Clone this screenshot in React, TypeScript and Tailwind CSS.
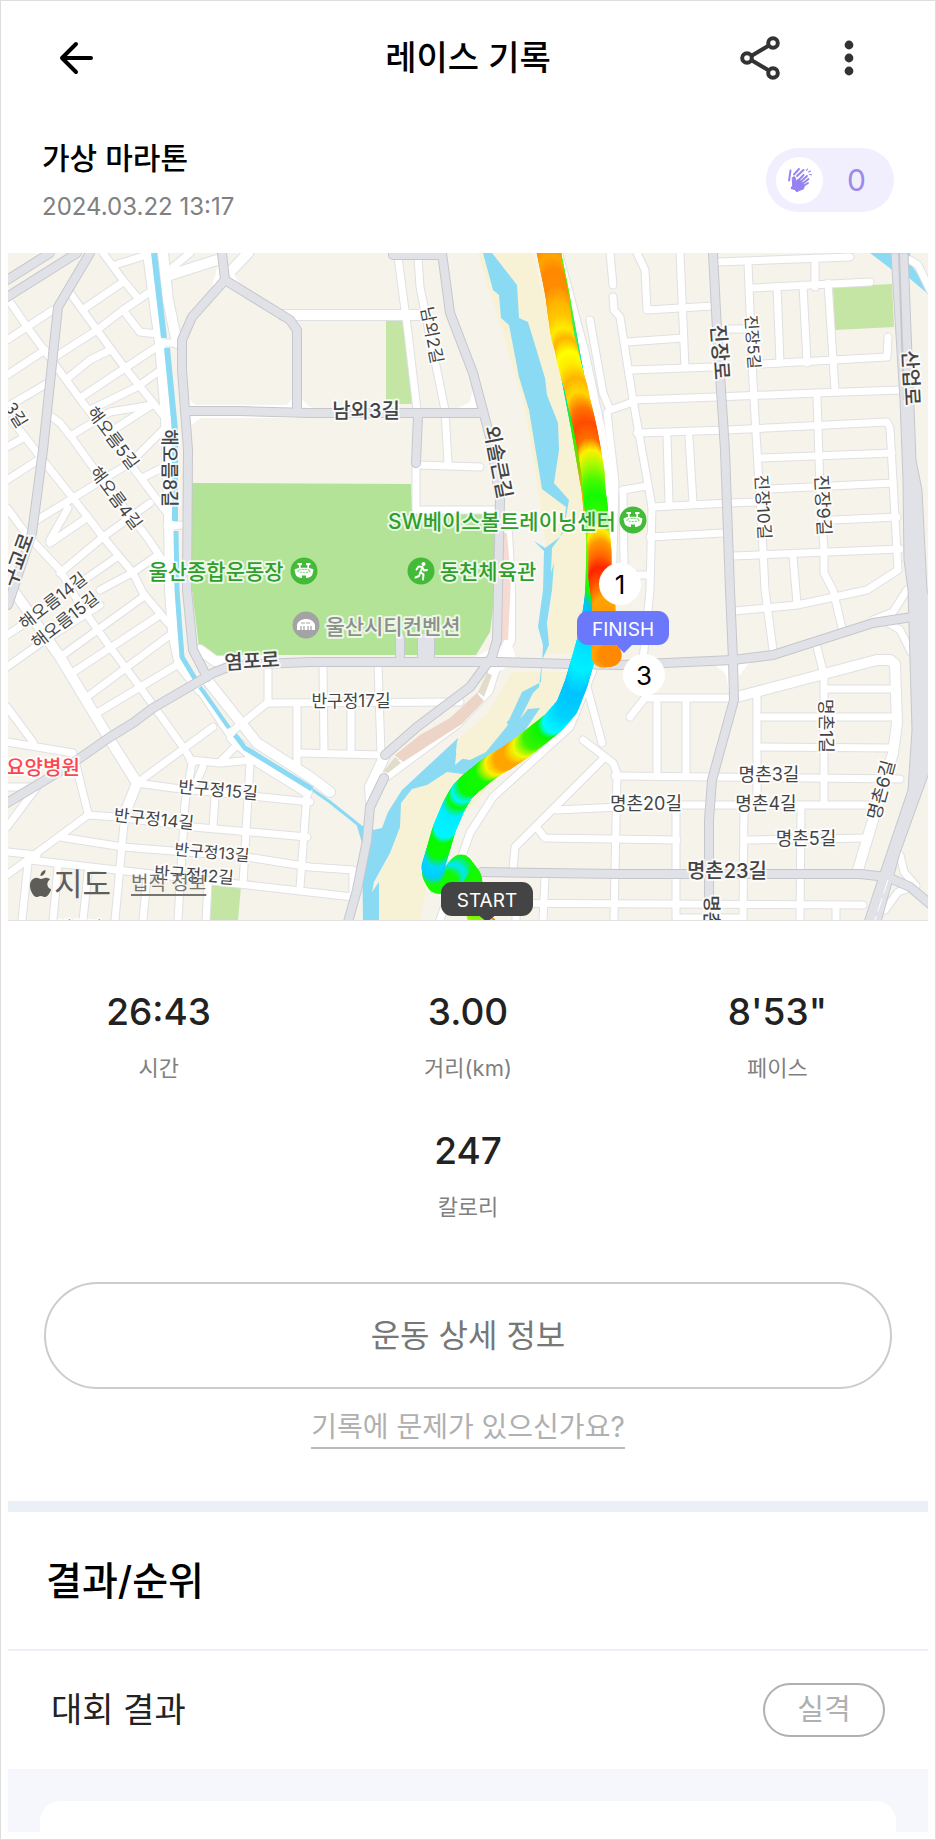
import React from 'react';

interface MapLabel {
    text: string;
    x: number;
    y: number;
    size: number;
    rotate?: number;
    bold?: boolean;
    color?: string;
}

interface RoutePoint {
    x: number;
    y: number;
    color: [number, number, number];
}

// Narrow residential streets
const streets = [
    '10,302 27,327 53,362 83,403 140,477 167,513', '70,293 97,330 125,368 167,420', '103,253 123,280 137,297',
    '115,265 147,255', '85,308 123,282', '7,340 53,310', '55,357 97,330 123,310 150,292', '123,310 140,332 157,334',
    '7,375 45,350', '68,378 90,360 110,350', '80,398 125,368 157,347', '90,410 137,387 158,372', '7,407 48,383',
    '72,435 110,412 152,405', '113,430 152,405', '37,520 73,498 130,463 165,428', '52,417 60,423 72,438 100,477 147,537 167,567',
    '7,447 25,437', '7,480 38,460', '12,420 25,437 53,473 73,498 103,537 133,573 143,593 168,623',
    '7,508 27,535 60,570 80,605 110,647 140,687 183,747 193,763', '142,478 162,468', '50,540 68,508', '50,543 88,517',
    '60,573 103,537 150,503', '80,583 117,557', '100,590 132,573 155,557', '160,343 178,343', '167,526 183,525',
    '167,272 190,253', '398,257 408,333 417,410', '418,257 420,287 445,410 448,463', '418,465 480,467',
    '416,463 416,510 497,510', '610,253 613,285', '613,297 614,310 620,317 633,400 652,507 650,590 643,660',
    '590,320 603,393 610,410 633,402', '607,413 615,483 612,590', '637,253 645,270 647,310 713,306', '680,253 685,367',
    '718,262 850,257', '748,263 753,383 763,550 765,590 773,650', '752,288 870,282', '777,287 780,363', '803,285 807,363',
    '815,258 815,287', '828,283 835,390', '627,342 683,338', '632,370 713,367', '730,329 747,329', '762,364 887,357 888,337',
    '633,400 717,397 817,393 900,390', '637,433 727,430 887,422 890,428 898,570 867,590 797,605 735,611', '667,437 669,503',
    '689,437 693,503', '817,397 820,490 824,550 824,573 833,590 842,628', '760,458 892,453', '770,489 893,483',
    '833,520 897,517', '652,507 730,503 757,502', '650,537 723,533', '733,556 900,549', '793,557 797,603', '623,490 647,486',
    '623,490 624,563', '637,575 650,575', '910,260 918,265 930,290', '7,635 50,607', '7,667 45,640 100,605',
    '63,655 143,597', '72,673 160,615', '87,697 170,635', '97,713 177,665', '7,707 33,742', '7,742 73,753 88,813',
    '7,787 33,787', '7,827 37,787', '137,783 213,727', '200,690 232,738', '230,733 267,703 460,702', '268,667 268,703',
    '297,705 297,770', '300,753 382,755', '323,665 324,752', '378,665 381,753', '351,705 351,752', '190,760 220,763 253,760',
    '235,747 220,762', '192,763 185,803 178,920', '203,767 193,790', '250,763 243,883', '137,783 173,788 310,802',
    '125,813 115,920', '88,815 117,817 193,827 307,837', '88,815 7,875', '215,797 213,827', '60,837 123,847 247,857 310,867 353,870 353,895',
    '307,793 300,887', '7,852 37,855', '30,860 117,870 353,897', '28,863 22,920', '58,867 53,920', '88,873 83,920',
    '147,877 143,920', '208,883 206,920', '593,670 570,727 493,797 470,833 457,870 440,920', '587,687 602,743',
    '583,740 613,763 617,773 614,920', '602,760 515,847 513,870', '557,810 620,807', '537,828 545,838 677,840',
    '545,877 543,920', '482,903 863,905', '516,903 516,920', '630,717 645,698 733,698', '657,703 657,773', '686,703 686,773',
    '615,776 900,779', '757,697 757,803', '817,647 824,675 824,803', '828,689 893,689', '762,717 893,717', '762,747 893,748',
    '615,805 870,805', '676,810 676,918 743,918', '744,807 743,918', '801,807 800,920', '748,840 867,838', '836,907 836,920',
    '873,620 893,612 907,590', '887,622 900,630 911,652', '900,855 904,872 916,886 898,892 885,910',
];

// White streets that are a bit wider
const wideStreets = [
    '148,253 160,343 166,417 169,510 170,590 173,633 180,665 200,690', '163,253 168,300 177,343', '170,275 217,260',
    '230,272 248,253', '283,315 423,315', '507,533 510,590 510,640 493,673 488,690 457,723 387,775',
    '557,253 583,350 600,430 612,520', '207,680 257,743 310,777 330,792', '232,738 260,763 307,792',
    '13,590 60,657 110,740 137,783 125,813', '385,755 370,787 371,803', '733,698 820,675 877,660 890,660 895,664 897,723 893,753 858,870',
    '200,650 215,661 240,661',
];

const mainRoads = [
    '713,253 717,330 725,450 730,590 733,660 734,700 712,780 709,820 709,900',
    '7,803 67,767 110,737 133,723 153,708 213,673 233,665 310,662 497,662 570,664 620,665 733,660 773,655 820,640 873,623 912,617',
    '90,253 58,307 50,383 43,450 32,533 8,605', '7,280 50,253', '7,297 77,253',
    '222,253 225,280 192,317 182,340 182,370 188,450 187,590 193,650 207,677', '225,280 290,320 297,330 297,410',
    '188,411 240,411 310,413 483,413', '393,255 440,255',
    '442,253 450,313 473,373 490,437 500,500 498,590 497,640 492,657 470,687 417,727 385,755',
    '384,778 370,807 367,840 357,890 348,922', '418,415 416,463', '400,638 400,660', '422,638 422,660', '430,638 430,660',
    '482,872 620,874 860,874 887,877', '890,878 910,887 930,904',
];

const HIGHWAY = '891,253 908,253 916,460 922,490 927,590 930,600 930,770 900,853 881,922 864,922 880,873 908,790 912,730 908,590 904,560 903,480 900,400';

const RIVER = '483,253 493,290 499,295 501,318 509,325 519,377 529,410 542,489 566,507 564,527 560,537 545,548 534,541 544,551 543,590 538,627 543,645 541,682 522,692 509,720 455,765 458,738 402,790 388,812 382,828 373,830 356,823 362,843 363,922 379,922 379,882 372,892 374,882 390,853 400,827 401,803 412,789 427,785 447,772 470,775 497,772 540,708 528,709 520,719 533,693 539,687 542,660 549,645 547,623 552,590 554,562 551,573 552,548 563,533 569,500 554,483 559,450 558,423 547,395 545,378 528,322 519,318 517,285 492,253';

const labels: MapLabel[] = [
    { text: '남외2길', x: 432, y: 335, size: 17, rotate: 79 },
    { text: '남외3길', x: 366, y: 411, size: 20, bold: true },
    { text: '외솔큰길', x: 498, y: 462, size: 20, rotate: 79, bold: true },
    { text: '진장로', x: 720, y: 352, size: 20, rotate: 86, bold: true },
    { text: '진장5길', x: 753, y: 342, size: 16, rotate: 86 },
    { text: '산업로', x: 911, y: 378, size: 20, rotate: 87, bold: true },
    { text: '진장10길', x: 763, y: 507, size: 17, rotate: 87 },
    { text: '진장9길', x: 823, y: 505, size: 18, rotate: 87 },
    { text: '해오름5길', x: 113, y: 438, size: 17, rotate: 53 },
    { text: '해오름4길', x: 116, y: 498, size: 17, rotate: 53 },
    { text: '해오름8길', x: 169, y: 468, size: 18, rotate: 90, bold: true },
    { text: '3길', x: 16, y: 415, size: 17, rotate: 58 },
    { text: '구교로', x: 18, y: 560, size: 20, rotate: -70, bold: true },
    { text: '해오름14길', x: 53, y: 601, size: 17, rotate: -38 },
    { text: '해오름15길', x: 65, y: 620, size: 17, rotate: -38 },
    { text: '염포로', x: 252, y: 661, size: 20, rotate: -3, bold: true },
    { text: '반구정17길', x: 351, y: 701, size: 17 },
    { text: '반구정15길', x: 218, y: 790, size: 17, rotate: 5 },
    { text: '반구정14길', x: 154, y: 819, size: 17, rotate: 6 },
    { text: '반구정13길', x: 212, y: 852, size: 16, rotate: 5 },
    { text: '반구정12길', x: 194, y: 875, size: 17, rotate: 4 },
    { text: '반구정', x: 80, y: 927, size: 16 },
    { text: '명촌1길', x: 826, y: 726, size: 17, rotate: 90 },
    { text: '명촌6길', x: 881, y: 790, size: 18, rotate: -75 },
    { text: '명촌3길', x: 769, y: 774, size: 18 },
    { text: '명촌4길', x: 766, y: 803, size: 18 },
    { text: '명촌20길', x: 646, y: 803, size: 18 },
    { text: '명촌5길', x: 806, y: 838, size: 18 },
    { text: '명촌23길', x: 727, y: 871, size: 20, bold: true },
    { text: '명촌로', x: 711, y: 920, size: 18, rotate: 90, bold: true },
    { text: '요양병원', x: 43, y: 768, size: 20, bold: true, color: '#ff4450' },
    { text: 'SW베이스볼트레이닝센터', x: 502, y: 521, size: 21, bold: true, color: '#2e9f2b' },
    { text: '울산종합운동장', x: 216, y: 571, size: 21, bold: true, color: '#2e9f2b' },
    { text: '동천체육관', x: 488, y: 571, size: 21, bold: true, color: '#2e9f2b' },
    { text: '울산시티컨벤션', x: 393, y: 626, size: 21, bold: true, color: '#8e8e8e' },
];

// Outbound leg, from START towards the north
const outbound: RoutePoint[] = [
    { x: 486, y: 927, color: [255, 60, 0] },
    { x: 480, y: 922, color: [255, 240, 0] },
    { x: 473, y: 895, color: [20, 250, 0] },
    { x: 470, y: 878, color: [20, 250, 0] },
    { x: 461, y: 866, color: [20, 250, 0] },
    { x: 453, y: 875, color: [0, 230, 255] },
    { x: 447, y: 883, color: [20, 250, 0] },
    { x: 438, y: 882, color: [20, 250, 0] },
    { x: 434, y: 875, color: [20, 250, 0] },
    { x: 433, y: 867, color: [0, 205, 255] },
    { x: 436, y: 857, color: [0, 215, 255] },
    { x: 439, y: 847, color: [10, 250, 0] },
    { x: 443, y: 833, color: [10, 250, 0] },
    { x: 445, y: 827, color: [0, 245, 255] },
    { x: 454, y: 806, color: [0, 235, 255] },
    { x: 459, y: 797, color: [10, 250, 0] },
    { x: 463, y: 791, color: [0, 245, 255] },
    { x: 470, y: 784, color: [10, 250, 0] },
    { x: 486, y: 771, color: [20, 250, 0] },
    { x: 496, y: 764, color: [255, 240, 0] },
    { x: 505, y: 759, color: [255, 165, 0] },
    { x: 514, y: 753, color: [255, 165, 0] },
    { x: 524, y: 746, color: [240, 250, 0] },
    { x: 534, y: 738, color: [60, 245, 0] },
    { x: 548, y: 727, color: [10, 245, 0] },
    { x: 554, y: 722, color: [0, 250, 255] },
    { x: 567, y: 707, color: [0, 210, 255] },
    { x: 576, y: 684, color: [0, 195, 255] },
    { x: 583, y: 660, color: [0, 240, 255] },
    { x: 591, y: 632, color: [0, 220, 255] },
    { x: 596, y: 600, color: [0, 190, 255] },
    { x: 597, y: 585, color: [20, 250, 0] },
    { x: 598, y: 540, color: [120, 250, 0] },
    { x: 593, y: 490, color: [255, 170, 0] },
    { x: 582, y: 425, color: [20, 250, 0] },
    { x: 573, y: 378, color: [0, 220, 220] },
    { x: 557, y: 290, color: [90, 250, 0] },
    { x: 548, y: 245, color: [90, 250, 0] },
];

// Way back to FINISH, painted over the outbound leg
const inbound: RoutePoint[] = [
    { x: 547, y: 245, color: [255, 120, 0] },
    { x: 551, y: 266, color: [255, 165, 0] },
    { x: 554, y: 280, color: [255, 135, 0] },
    { x: 557, y: 296, color: [255, 140, 0] },
    { x: 559, y: 312, color: [255, 180, 0] },
    { x: 561, y: 326, color: [255, 200, 0] },
    { x: 563, y: 338, color: [255, 235, 0] },
    { x: 566, y: 348, color: [255, 180, 0] },
    { x: 569, y: 362, color: [255, 255, 0] },
    { x: 572, y: 374, color: [255, 235, 0] },
    { x: 576, y: 388, color: [255, 180, 0] },
    { x: 579, y: 402, color: [255, 215, 0] },
    { x: 583, y: 418, color: [255, 115, 0] },
    { x: 586, y: 432, color: [255, 75, 0] },
    { x: 589, y: 448, color: [255, 110, 0] },
    { x: 591, y: 460, color: [255, 240, 0] },
    { x: 593, y: 472, color: [180, 250, 0] },
    { x: 594, y: 490, color: [70, 250, 0] },
    { x: 596, y: 505, color: [20, 250, 0] },
    { x: 598, y: 530, color: [60, 250, 0] },
    { x: 599, y: 540, color: [255, 240, 0] },
    { x: 600, y: 552, color: [255, 150, 0] },
    { x: 600, y: 565, color: [255, 105, 0] },
    { x: 600, y: 578, color: [255, 35, 0] },
    { x: 602, y: 592, color: [255, 85, 0] },
    { x: 604, y: 608, color: [255, 165, 0] },
    { x: 603, y: 640, color: [255, 140, 0] },
    { x: 603, y: 656, color: [255, 165, 0] },
    { x: 612, y: 655, color: [255, 130, 0] },
];

const interpolate = (points: RoutePoint[]) => {
    const dots: { x: number; y: number; fill: string }[] = [];
    for (let i = 0; i < points.length - 1; i++) {
        const a = points[i];
        const b = points[i + 1];
        const steps = Math.max(1, Math.round(Math.hypot(b.x - a.x, b.y - a.y) / 2));
        for (let s = 0; s < steps; s++) {
            const t = s / steps;
            const [r, g, bl] = a.color.map((c, k) => Math.round(c + (b.color[k] - c) * t));
            dots.push({ x: a.x + (b.x - a.x) * t, y: a.y + (b.y - a.y) * t, fill: `rgb(${r},${g},${bl})` });
        }
    }
    return dots;
};

const Lines: React.FC<{ items: string[]; color: string; width: number }> = ({ items, color, width }) => (
    <g fill="none" stroke={color} strokeWidth={width} strokeLinejoin="round" strokeLinecap="round">
        {items.map((points, i) => <polyline key={i} points={points} />)}
    </g>
);

const StadiumPin: React.FC<{ x: number; y: number }> = ({ x, y }) => (
    <g transform={`translate(${x} ${y})`}>
        <circle r="13.5" fill="#43bb38" />
        <path d="M-6.500-8h4.500v2h-1.300v3h-1.800v-3h-1.400zM2-8h4.500v2H5.100v3H3.300v-3H2z" fill="#fff" />
        <path d="M-9.500-1C-9-4 9-4 9.500-1L8.500 3C8 6 3.500 7 2 7V4.500h-4V7c-1.500 0-6-1-6.500-4z" fill="#fff" />
        <ellipse cy="0" rx="6.500" ry="1.500" fill="none" stroke="#43bb38" strokeWidth="0.800" strokeDasharray="2 1" />
    </g>
);

const RouteMap: React.FC = () => (
    <svg viewBox="8 253 920 667" className="block w-full" role="img" aria-label="레이스 경로 지도" fontFamily='Inter, "Noto Sans CJK KR", sans-serif'>
        <rect x="8" y="253" width="920" height="667" fill="#f6f3eb" />

        {/* parks and river banks */}
        <polygon points="192,483 411,484 412,509 499,509 494,552 494,600 490,632 476,655 200,655 192,590" fill="#b2e396" />
        <polygon points="386,320 405,320 412,404 386,404" fill="#c4e5a3" />
        <polygon points="833,287 892,284 894,327 835,330" fill="#c4e5a3" />
        <polygon points="212,885 241,886 238,920 210,920" fill="#c4e5a3" />
        <polygon points="478,253 532,253 557,343 588,480 588,590 584,655 545,653 552,590 540,500 523,400" fill="#f7f1d6" />
        <polygon points="512,672 577,672 560,725 520,765 470,768 450,755 455,742 488,713" fill="#f7f1d6" />
        <polygon points="412,789 447,772 510,762 460,820 430,870 420,922 379,922 370,895 390,853 400,803" fill="#f7f1d6" />
        <polygon points={RIVER} fill="#8adaf4" />
        <polygon points="457,741 456,752 458,758 470,760 486,752 508,725 500,705" fill="#f7f1d6" />
        <polygon points="870,253 910,253 912,266 928,289 928,294 908,277 891,269" fill="#8adaf4" />
        <polyline points="310,788 330,802 360,826" fill="none" stroke="#8adaf4" strokeWidth="3" />

        {/* roads */}
        <Lines items={streets} color="#dfe0e3" width={9} />
        <Lines items={wideStreets} color="#dfe0e3" width={12} />
        <Lines items={streets} color="#ffffff" width={7} />
        <Lines items={wideStreets} color="#ffffff" width={10} />
        <polyline points="154,253 164,338" fill="none" stroke="#8adaf4" strokeWidth="6" />
        <polyline points="167,348 175,430 175,521" fill="none" stroke="#8adaf4" strokeWidth="6" />
        <polyline points="176,531 177,590 182,657 197,682" fill="none" stroke="#8adaf4" strokeWidth="5" />
        <polyline points="200,687 229,728" fill="none" stroke="#8adaf4" strokeWidth="4" />
        <polyline points="235,735 245,748 312,789" fill="none" stroke="#8adaf4" strokeWidth="5" />
        <g fill="#ffffff">
            <polygon points="225,280 212,286 219,262 232,270 240,285" />
            <polygon points="188,398 195,405 297,405 297,418 200,418 188,428" />
            <polygon points="297,393 286,406 268,412 325,412 308,406" />
            <polygon points="470,660 492,648 512,645 516,660 505,668 492,675" />
            <polygon points="473,388 470,402 458,408 483,410" />
            <polygon points="714,664 726,674 730,700 737,700 739,676 750,662" />
        </g>
        <polygon points="501,533 507,533 511,580 508,640 497,640" fill="#f6dbd2" />
        <polygon points="477,693 484,701 462,724 440,738 403,762 395,755 420,735 450,718" fill="#ecd4c6" />
        <polygon points="487,673 492,675 484,697 478,692" fill="#e2dccb" />
        <polygon points="395,757 401,763 388,773 383,772" fill="#e2dccb" />
        <Lines items={mainRoads} color="#c6c7cc" width={10} />
        <polygon points={HIGHWAY} fill="#e1e2e7" stroke="#c6c7cc" strokeWidth="1" />
        <Lines items={mainRoads} color="#e1e2e7" width={8} />
        <polyline points="899,253 904,400" fill="none" stroke="#c6c7cc" strokeWidth="2" />
        <polyline points="888,880 875,920" fill="none" stroke="#ffffff" strokeWidth="1" strokeDasharray="14 5" />

        {/* pace coloured route */}
        {interpolate(outbound).map((dot, i) => <circle key={i} cx={dot.x} cy={dot.y} r="11.5" fill={dot.fill} />)}
        {interpolate(inbound).map((dot, i) => <circle key={i} cx={dot.x} cy={dot.y} r="11.5" fill={dot.fill} />)}

        {/* points of interest */}
        <StadiumPin x={304} y={571} />
        <StadiumPin x={633} y={520} />
        <g transform="translate(421 571)">
            <circle r="13.5" fill="#43bb38" />
            <circle cx="2.5" cy="-7" r="2" fill="#fff" />
            <path d="M-4.500-1.500l2-3 4 .5-2 5 3 2.500-.5 5M-.5 1l-1.500 4-3.500 1.500M1.500-3.500l1.500 3 3-.5" fill="none" stroke="#fff" strokeWidth="2" strokeLinecap="round" strokeLinejoin="round" />
        </g>
        <g transform="translate(306 625)">
            <circle r="13.5" fill="#a3a3a3" />
            <path d="M-9 5v-5C-7-8 7-8 9 0v5z" fill="#fff" />
            <path d="M-5 5V1M-2 5V1M2 5V1M5 5V1M-5-2h10" stroke="#a3a3a3" strokeWidth="1.200" strokeDasharray="4 1" />
        </g>

        {labels.map(label => (
            <text
                key={label.text}
                x={label.x}
                y={label.y}
                transform={label.rotate ? `rotate(${label.rotate} ${label.x} ${label.y})` : undefined}
                fontSize={label.size}
                fontWeight={label.bold ? 500 : 400}
                fill={label.color ?? '#444444'}
                stroke="#ffffff"
                strokeOpacity="0.75"
                strokeWidth="4"
                strokeLinejoin="round"
                paintOrder="stroke"
                textAnchor="middle"
                dominantBaseline="central"
            >
                {label.text}
            </text>
        ))}

        {/* kilometre markers */}
        <g textAnchor="middle" dominantBaseline="central" fontSize="26">
            <circle cx="620" cy="584" r="21" fill="#fff" />
            <text x="620" y="584">1</text>
            <circle cx="644" cy="675" r="21" fill="#fff" />
            <text x="644" y="675">3</text>
        </g>
        <g textAnchor="middle" dominantBaseline="central" fontSize="19" fill="#fff">
            <path d="M615 644h18l-9 9z" fill="#6b78fb" />
            <rect x="577" y="611" width="92" height="34" rx="11" fill="#6b78fb" />
            <text x="623" y="629">FINISH</text>
            <path d="M477 914h20l-10 8z" fill="#444" />
            <rect x="441" y="882" width="92" height="34" rx="11" fill="#444" />
            <text x="487" y="900">START</text>
        </g>
    </svg>
);

const ClapIcon: React.FC = () => (
    <svg width="26" height="26" viewBox="0 0 26 26" fill="none" stroke="#9682f0" strokeLinecap="round" aria-hidden="true">
        <path d="M5.500 10.500c1.500-1.500 3-.8 3 1.500v2.500l3-2.500 6 6-1 4-4.500 1.500-2 1.500-2.500-2.500L4 21.500l1.500-3z" fill="#9682f0" />
        <path d="M11 14l5.500-6M13 15.500l7-6.500M14.500 17.500l7-5.500M15.500 19.500l5.500-3.500" strokeWidth="1.900" />
        <path d="M3.500 3.500L2 13.500M7 7.500l5-5.500M10 9l6.500-6" strokeWidth="1.900" />
        <path d="M19.500 3.500l1-1.500M21.500 5l2-1M22.500 7.500l2 .3" strokeWidth="1.100" />
    </svg>
);

const Stat: React.FC<{ value: string; label: string }> = ({ value, label }) => (
    <div className="flex flex-col items-center gap-4">
        <p className="text-[37px] leading-[48px] font-medium text-[#222]">{value}</p>
        <p className="text-[22px] leading-8 text-[#808080]">{label}</p>
    </div>
);

const App: React.FC = () => (
    <div className='border border-[#ddd] bg-white px-[7px] pb-[7px] font-[Inter,"Noto_Sans_CJK_KR",sans-serif] text-black'>
        <header className="grid h-[114px] grid-cols-[1fr_auto_1fr] items-center">
            <div className="pl-[50px]">
                <button aria-label="뒤로" className="block">
                    <svg width="36" height="36" viewBox="0 0 36 36" fill="none" stroke="#000" strokeWidth="4" strokeLinecap="round" strokeLinejoin="round">
                        <path d="M33 18H4M18 4L4 18l14 14" />
                    </svg>
                </button>
            </div>
            <h1 className="text-[34px] leading-[48px] font-medium">레이스 기록</h1>
            <div className="flex items-center justify-end gap-16 pr-[74px]">
                <button aria-label="공유">
                    <svg width="40" height="44" viewBox="0 0 40 44" fill="none" stroke="#333" strokeWidth="4">
                        <path d="M12 19.500L28 10M12 24.500L28 34" />
                        <circle cx="7" cy="22" r="4.800" />
                        <circle cx="33" cy="7" r="4.800" />
                        <circle cx="33" cy="37" r="4.800" />
                    </svg>
                </button>
                <button aria-label="더보기">
                    <svg width="10" height="44" viewBox="0 0 10 44" fill="#333">
                        <circle cx="5" cy="9" r="4.400" />
                        <circle cx="5" cy="22" r="4.400" />
                        <circle cx="5" cy="35" r="4.400" />
                    </svg>
                </button>
            </div>
        </header>

        <section className="flex h-[138px] items-center justify-between pr-[34px] pb-2 pl-[34px]">
            <div className="flex flex-col gap-[13px]">
                <h2 className="text-3xl leading-10 font-medium">가상 마라톤</h2>
                <p className="text-2xl leading-8 text-[#808080]">2024.03.22 13:17</p>
            </div>
            <button aria-label="박수 0" className="flex h-16 w-32 items-center rounded-full bg-[#f1effd] pl-[10px]">
                <span className="flex size-[47px] items-center justify-center rounded-full bg-white">
                    <ClapIcon />
                </span>
                <span className="flex-1 pr-1 text-center text-[30px] text-[#9b8aea]">0</span>
            </button>
        </section>

        <section className="relative border-b border-[#e2e2e2]">
            <RouteMap />
            <div className="absolute bottom-4 left-[22px] flex items-center text-[#5f5d58]">
                <svg width="22" height="28" viewBox="0 0 22 28" fill="currentColor" aria-hidden="true">
                    <path d="M15.500 0c.3 3-2 5.800-5 6C10.200 3.300 12.700.4 15.500 0zM20 9.600c-4 2.600-3.400 8 1.200 9.900C20 22.800 17.600 27 15 27c-1.700 0-2.200-1.100-4.200-1.100S8.200 27 6.600 27C3.500 27 0 20.800 0 15.700 0 10.500 3.300 7.700 6.500 7.700c2 0 3.400 1.300 4.500 1.300 1.200 0 3-1.400 5.300-1.300 1.600.1 2.900.7 3.700 1.900z" />
                </svg>
                <span className="ml-[2px] text-[31px] leading-10">지도</span>
                <a href="#legal" className="ml-5 text-[19px] leading-6 text-[#77756f] underline decoration-2 underline-offset-4">법적 정보</a>
            </div>
        </section>

        <section className="pt-[67px]">
            <div className="-mx-1 grid grid-cols-3">
                <Stat value="26:43" label="시간" />
                <Stat value="3.00" label="거리(km)" />
                <Stat value={'8\'53"'} label="페이스" />
            </div>
            <div className="mt-[43px]">
                <Stat value="247" label="칼로리" />
            </div>
        </section>

        <div className="flex flex-col items-center px-9 pt-[59px] pb-[52px]">
            <button className="h-[107px] w-full rounded-full border-2 border-[#ccc] text-[32px] text-[#777]">
                운동 상세 정보
            </button>
            <a href="#report" className="mt-[18px] border-b-2 border-[#bbb] text-[28px] leading-10 text-[#b0b0b0]">
                기록에 문제가 있으신가요?
            </a>
        </div>

        <section className="border-t-[11px] border-[#ebeff8]">
            <h2 className="border-b-2 border-[#ebf0f6] pl-[38px] text-[39px] leading-[137px] font-medium">결과/순위</h2>
            <div className="flex h-[118px] items-center justify-between pr-[43px] pl-[43px]">
                <p className="text-[34px] leading-[48px] text-[#222]">대회 결과</p>
                <span className="flex h-[54px] w-[122px] items-center justify-center rounded-full border-2 border-[#b0b0b0] text-[29px] text-[#b0b0b0]">
                    실격
                </span>
            </div>
            <div className="bg-[#f6f7fc] px-8 pt-8">
                <div className="h-[31px] rounded-t-[20px] bg-white" />
            </div>
        </section>
    </div>
);

export default App;
